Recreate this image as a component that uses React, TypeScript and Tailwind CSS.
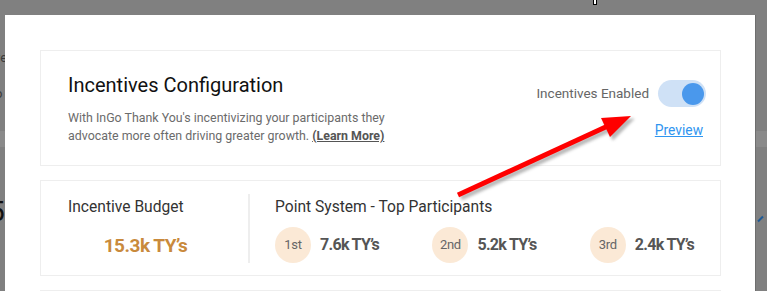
import React from 'react'

// Podium rows for the point system
const podium = [
  { place: '1st', value: '7.6k TY’s' },
  { place: '2nd', value: '5.2k TY’s' },
  { place: '3rd', value: '2.4k TY’s' },
]

function Toggle() {
  return (
    <div className="w-[48px] h-[27px] rounded-full bg-[#cfe1f6] flex items-center justify-end pr-[2px]">
      <div className="w-[22px] h-[22px] rounded-full bg-[#4a98ec]" />
    </div>
  )
}

function Arrow() {
  return (
    <svg className="absolute left-0 top-0 pointer-events-none" width="767" height="291" viewBox="0 0 767 291">
      <defs>
        <filter id="sh" x="-20%" y="-20%" width="140%" height="140%">
          <feGaussianBlur stdDeviation="1.5" />
        </filter>
      </defs>
      <g transform="translate(3 3)" fill="#9a9a9a" stroke="#9a9a9a" filter="url(#sh)" opacity="0.7">
        <line x1="458" y1="195" x2="610" y2="125" strokeWidth="5" />
        <polygon points="631,116 601,118 610,137" />
      </g>
      <line x1="458" y1="195" x2="610" y2="125" stroke="#ff0000" strokeWidth="5" />
      <polygon points="631,116 601,118 610,137" fill="#ff0000" />
    </svg>
  )
}

export default function App() {
  return (
    <div
      className="relative w-[767px] h-[291px] overflow-hidden bg-[#808080]"
      style={{ fontFamily: 'Roboto, "Liberation Sans", sans-serif' }}
    >
      {/* page behind the overlay */}
      <span className="absolute left-[-6px] top-[48px] text-[13px] text-[#3a3a3a]">ve</span>
      <span className="absolute left-[-5px] top-[84px] text-[13px] text-[#3a3a3a]">o</span>
      <div className="absolute left-0 top-[131px] w-full h-[16px] bg-[#8a8a8a]" />
      <span className="absolute left-[-11px] top-[198px] text-[28px] leading-none text-[#111]">5</span>
      <div className="absolute left-[757px] top-[218px] w-[7px] h-[2px] bg-[#1e5a96] -rotate-45" />
      <div className="absolute left-[593px] top-[-2px] w-[4px] h-[7px] bg-white border border-black" />

      {/* modal */}
      <div className="absolute left-[5px] top-[15px] w-[751px] h-[300px] bg-white border-r border-[#6e6e6e] pl-[35px] pt-[35px]">
        <div className="w-[681px] flex flex-col gap-[14px]">
          <section className="h-[116px] border border-[#eeeeee] pl-[27px] pr-[14px] pt-[20px] flex justify-between">
            <div>
              <h1 className="text-[20px] leading-[28px] text-[#111]">Incentives Configuration</h1>
              <p className="mt-[10px] text-[12.4px] leading-[18px] text-[#6b6b6b] whitespace-nowrap">
                With InGo Thank You's incentivizing your participants they
                <br />
                advocate more often driving greater growth.{' '}
                <span className="font-bold text-[#555] underline">(Learn More)</span>
              </p>
            </div>
            <div className="flex flex-col items-end pt-[9px]">
              <div className="flex items-center gap-[9px]">
                <span className="text-[13.5px] text-[#666]">Incentives Enabled</span>
                <Toggle />
              </div>
              <a className="mt-[13px] mr-[3px] text-[13.8px] text-[#2f95f0] underline">Preview</a>
            </div>
          </section>

          <section className="h-[96px] border border-[#eeeeee] flex items-center">
            <div className="w-[207px] pl-[27px] h-full pt-[15px]">
              <h2 className="text-[15.6px] leading-[22px] text-[#333]">Incentive Budget</h2>
              <div className="mt-[14px] text-center pr-[25px] text-[19px] font-bold tracking-[-0.5px] text-[#c98a3c]">15.3k TY’s</div>
            </div>
            <div className="w-[2px] h-[69px] bg-[#eeeeee]" />
            <div className="flex-1 h-full pl-[25px] pr-[26px] pt-[15px]">
              <h2 className="text-[15.6px] leading-[22px] text-[#333]">Point System - Top Participants</h2>
              <div className="mt-[9px] flex justify-between">
                {podium.map(p => (
                  <div key={p.place} className="flex items-center gap-[9px]">
                    <div className="w-[36px] h-[36px] rounded-full bg-[#fbe9d6] flex items-center justify-center text-[13px] text-[#666] tracking-[-0.3px]">
                      {p.place}
                    </div>
                    <span className="text-[16px] font-bold tracking-[-0.7px] text-[#555]">{p.value}</span>
                  </div>
                ))}
              </div>
            </div>
          </section>

          <section className="h-[40px] border border-[#eeeeee]" />
        </div>
      </div>

      <Arrow />
    </div>
  )
}
